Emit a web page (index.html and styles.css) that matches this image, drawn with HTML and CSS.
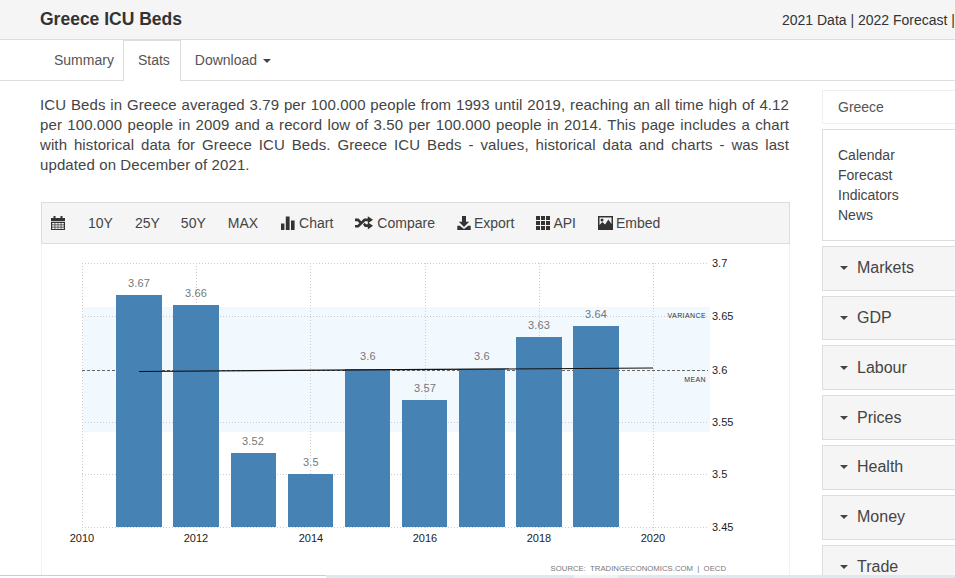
FILE: index.html
```html
<!DOCTYPE html>
<html lang="en">
<head>
<meta charset="utf-8">
<title>Greece ICU Beds</title>
<link rel="stylesheet" href="styles.css">
</head>
<body>
<header class="top">
  <h1 class="title">Greece ICU Beds</h1>
  <span class="meta">2021 Data | 2022 Forecast |</span>
</header>
<nav class="tabs">
  <a class="tab tab-first">Summary</a>
  <a class="tab tab-active">Stats</a>
  <a class="tab">Download <i class="caret caret-tab"></i></a>
</nav>
<div class="layout">
  <main class="main">
    <p class="intro">ICU Beds in Greece averaged 3.79 per 100.000 people from 1993 until 2019, reaching an all time high of 4.12 per 100.000 people in 2009 and a record low of 3.50 per 100.000 people in 2014. This page includes a chart with historical data for Greece ICU Beds. Greece ICU Beds - values, historical data and charts - was last updated on December of 2021.</p>
    <section class="panel">
      <div class="toolbar">
        <svg class="ico" viewBox="0 0 14 14"><path fill-rule="evenodd" d="M0 2h2.500V0h2v2h5V0h2v2H14v3H0zM0 5.800h14V14H0zM1.200 7v1.400h2.400V7zm3.100 0v1.400h2.400V7zm3 0v1.400h2.400V7zm3.100 0v1.400h2.400V7zM1.200 9.300v1.400h2.400V9.300zm3.100 0v1.400h2.400V9.300zm3 0v1.400h2.400V9.300zm3.100 0v1.400h2.400V9.300zM1.200 11.500v1.400h2.400v-1.400zm3.100 0v1.400h2.400v-1.400zm3 0v1.400h2.400v-1.400zm3.100 0v1.400h2.400v-1.400z"/></svg>
        <a class="tool tool-first">10Y</a>
        <a class="tool">25Y</a>
        <a class="tool tool-tight">50Y</a>
        <a class="tool">MAX</a>
        <a class="tool tool-chart"><svg class="ico" viewBox="0 0 14 14"><path d="M0 7.500h3.400V14H0zM4.800 0.500h3.800V14H4.800zM10 4.500h3.600V14H10z"/></svg>Chart</a>
        <a class="tool tool-wide"><svg class="ico ico-wide" viewBox="0 0 18 14"><path d="M0 2.600h3.600l2.800 3-1.700 1.900-2.200-2.300H0zM0 9h2.500l6.600-6.400h3.700V.3L18 3.800l-5.200 3.600V5.200h-2.600L3.600 11.600H0zM8 8.600l1.700-1.800 1.300 1.500h1.800V6.200L18 9.800l-5.200 3.800v-2.500H9.800z"/></svg>Compare</a>
        <a class="tool"><svg class="ico" viewBox="0 0 14 14"><path d="M5 0h4v5.800h3.200L7 11 1.800 5.800H5zM0.300 9.800h2.500L7 13l4.200-3.200h2.500V14H.3z"/></svg>Export</a>
        <a class="tool"><svg class="ico" viewBox="0 0 14 14"><path d="M0 0h4v4H0zM5 0h4v4H5zM10 0h4v4h-4zM0 5h4v4H0zM5 5h4v4H5zM10 5h4v4h-4zM0 10h4v4H0zM5 10h4v4H5zM10 10h4v4h-4z"/></svg>API</a>
        <a class="tool"><svg class="ico ico-pic" viewBox="0 0 15 14"><path fill-rule="evenodd" d="M0 0h15v14H0zM1.500 1.500v7.500l2.800-3 2.800 2.500 3.200-5 3.200 4.500V1.500zM4 2.500a1.500 1.500 0 1 1 0 3 1.500 1.500 0 0 1 0-3z"/></svg>Embed</a>
      </div>
      <svg class="chart" viewBox="42 244 747 331" width="747" height="331" role="img">
        <rect class="band" x="83" y="307" width="627" height="125"/>
        <g class="grid">
          <path d="M82 263.500H708M82 316.500H708M82 422.500H708M82 474.500H708M82 527.500H708"/>
          <path d="M82.500 263V533M196.500 263V533M310.500 263V533M425.500 263V533M539.500 263V533M653.500 263V533"/>
        </g>
        <path class="mean" d="M82 370.500H708"/>
        <g class="bars">
          <rect x="116" y="295" width="46" height="232"/>
          <rect x="173" y="305" width="46" height="222"/>
          <rect x="231" y="453" width="45" height="74"/>
          <rect x="288" y="474" width="45" height="53"/>
          <rect x="345" y="369" width="45" height="158"/>
          <rect x="402" y="400" width="45" height="127"/>
          <rect x="459" y="369" width="46" height="158"/>
          <rect x="516" y="337" width="46" height="190"/>
          <rect x="573" y="326" width="46" height="201"/>
        </g>
        <path class="trend" d="M139 371.500L653 368"/>
        <g class="vals">
          <text x="139" y="287">3.67</text>
          <text x="196" y="297">3.66</text>
          <text x="253" y="445">3.52</text>
          <text x="311" y="466">3.5</text>
          <text x="368" y="360">3.6</text>
          <text x="425" y="392">3.57</text>
          <text x="482" y="360">3.6</text>
          <text x="539" y="329">3.63</text>
          <text x="596" y="318">3.64</text>
        </g>
        <g class="xlab">
          <text x="82" y="542">2010</text>
          <text x="196" y="542">2012</text>
          <text x="311" y="542">2014</text>
          <text x="425" y="542">2016</text>
          <text x="539" y="542">2018</text>
          <text x="653" y="542">2020</text>
        </g>
        <g class="ylab">
          <text x="712" y="267">3.7</text>
          <text x="712" y="320">3.65</text>
          <text x="712" y="374">3.6</text>
          <text x="712" y="426">3.55</text>
          <text x="712" y="478">3.5</text>
          <text x="712" y="531">3.45</text>
        </g>
        <g class="tag">
          <text x="706" y="318">VARIANCE</text>
          <text x="706" y="382">MEAN</text>
        </g>
        <text class="source" x="726" y="571">SOURCE:  TRADINGECONOMICS.COM  |  OECD</text>
      </svg>
    </section>
  </main>
  <aside class="side">
    <div class="country">Greece</div>
    <ul class="links">
      <li>Calendar</li>
      <li>Forecast</li>
      <li>Indicators</li>
      <li>News</li>
    </ul>
    <div class="drop"><i class="caret caret-side"></i>Markets</div>
    <div class="drop"><i class="caret caret-side"></i>GDP</div>
    <div class="drop"><i class="caret caret-side"></i>Labour</div>
    <div class="drop"><i class="caret caret-side"></i>Prices</div>
    <div class="drop"><i class="caret caret-side"></i>Health</div>
    <div class="drop"><i class="caret caret-side"></i>Money</div>
    <div class="drop"><i class="caret caret-side"></i>Trade</div>
  </aside>
</div>
<div class="strip">
  <span class="strip-a"></span>
  <span class="strip-b"></span>
  <span class="strip-c"></span>
  <span class="strip-b strip-d"></span>
</div>
</body>
</html>
```

FILE: styles.css
```css
* { box-sizing: border-box; }
html, body { margin: 0; height: 578px; overflow: hidden; background: #fff; }
body { font-family: "Liberation Sans", Arial, sans-serif; font-size: 14px; line-height: 20px; color: #333; }

.top { height: 40px; background: #f5f5f5; border-bottom: 1px solid #ddd; display: flex; justify-content: space-between; align-items: center; padding-left: 40px; white-space: nowrap; }
.title { margin: 0 0 2px; font-size: 17.5px; font-weight: bold; color: #333; }

.tabs { height: 41px; border-bottom: 1px solid #ddd; display: flex; padding-left: 40px; }
.tab { height: 41px; padding: 0 13px; line-height: 39px; color: #555; border: 1px solid transparent; border-bottom: 0; }
.tab-first { padding-right: 8px; }
.tab-active { background: #fff; border-color: #ddd; padding: 0 10px 0 14px; }
.caret { display: inline-block; width: 0; height: 0; border-left: 4px solid transparent; border-right: 4px solid transparent; border-top: 4px solid #444; }
.caret-tab { margin-left: 2px; vertical-align: middle; }

.layout { display: grid; grid-template-columns: 749px 145px; column-gap: 33px; padding-left: 40px; }
.main { padding-top: 14px; }
.intro { margin: 0 0 27px; font-size: 15px; text-align: justify; color: #444; letter-spacing: 0.1px; }

.panel { border-left: 1px solid #f2f2f2; border-right: 1px solid #f2f2f2; margin-left: 1px; width: 749px; }
.toolbar { height: 42px; background: #f5f5f5; border: 1px solid #ddd; display: flex; align-items: center; gap: 22px; padding-left: 9px; margin: 0 -1px; color: #444; }
.tool { display: flex; align-items: center; gap: 3px; }
.tool-first { margin-left: 1px; }
.tool-wide { gap: 4px; }
.tool-tight { margin-left: -1px; }
.tool-chart { margin-left: 1px; gap: 4px; }
.ico { width: 14px; height: 14px; fill: #333; flex: none; }
.ico-wide { width: 18px; }
.ico-pic { width: 15px; }

.chart { display: block; }
.band { fill: #f1f9fe; }
.grid path { fill: none; stroke: #ccc; stroke-width: 1; stroke-dasharray: 1 2; }
.mean { fill: none; stroke: #666; stroke-width: 1; stroke-dasharray: 3 2; }
.bars rect { fill: #4682b4; }
.trend { fill: none; stroke: #111; stroke-width: 1.2; }
.chart text { font-family: "Liberation Sans", Arial, sans-serif; font-size: 11px; }
.vals text { fill: #777; text-anchor: middle; letter-spacing: 0.2px; }
.xlab text { fill: #222; text-anchor: middle; }
.ylab text { fill: #222; }
.chart .tag text { fill: #333; font-size: 7px; text-anchor: end; letter-spacing: 0.4px; }
.chart .source { fill: #777; font-size: 7.750px; text-anchor: end; white-space: pre; }

.side { padding-top: 9px; }
.country { height: 34px; border: 1px solid #f0f0f0; border-right: 0; padding: 6px 15px; color: #555; margin-bottom: 5px; }
.links { list-style: none; margin: 0 0 4.800px; padding: 15px; border: 1px solid #ddd; border-right: 0; height: 112px; color: #444; }
.drop { height: 44.800px; margin-bottom: 5px; background: #f5f5f5; border: 1px solid #ddd; border-right: 0; display: flex; align-items: center; padding-left: 17px; font-size: 16px; color: #444; }
.caret-side { margin-right: 9px; }

.strip { position: fixed; left: 0; right: 0; bottom: 0; height: 3px; display: flex; }
.strip-a { width: 326px; background: #fff; border-top: 1px solid #ccc; }
.strip-b { width: 248px; background: #dbe9f1; }
.strip-c { width: 44px; background: #eef4f8; }
.strip-d { flex: 1; }
```
